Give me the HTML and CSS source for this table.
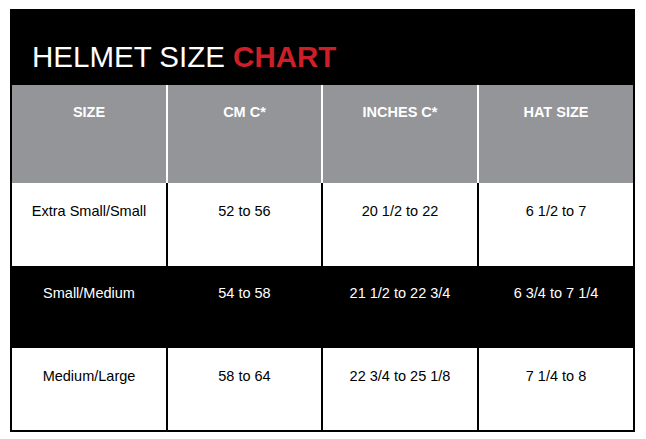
FILE: index.html
```html
<!DOCTYPE html>
<html>
<head>
<meta charset="utf-8">
<link rel="stylesheet" href="styles.css">
</head>
<body>
<div class="chart">
  <div class="title">HELMET SIZE <span class="accent">CHART</span></div>
  <div class="row head">
    <div class="cell">SIZE</div>
    <div class="cell">CM C*</div>
    <div class="cell">INCHES C*</div>
    <div class="cell">HAT SIZE</div>
  </div>
  <div class="row light r1">
    <div class="cell">Extra Small/Small</div>
    <div class="cell">52 to 56</div>
    <div class="cell">20 1/2 to 22</div>
    <div class="cell">6 1/2 to 7</div>
  </div>
  <div class="row dark">
    <div class="cell">Small/Medium</div>
    <div class="cell">54 to 58</div>
    <div class="cell">21 1/2 to 22 3/4</div>
    <div class="cell">6 3/4 to 7 1/4</div>
  </div>
  <div class="row light">
    <div class="cell">Medium/Large</div>
    <div class="cell">58 to 64</div>
    <div class="cell">22 3/4 to 25 1/8</div>
    <div class="cell">7 1/4 to 8</div>
  </div>
</div>
</body>
</html>
```

FILE: styles.css
```css
html, body {
  margin: 0;
  padding: 0;
  background: #ffffff;
}
body {
  padding: 9px 0 0 10px;
  font-family: "Liberation Sans", Arial, sans-serif;
}
.chart {
  width: 625px;
  box-sizing: border-box;
  border: 2px solid #000;
  border-top: none;
  background: #000;
}
.title {
  height: 76px;
  box-sizing: border-box;
  padding: 33px 0 0 20px;
  font-size: 29.5px;
  line-height: 30px;
  color: #fff;
  white-space: nowrap;
}
.accent {
  color: #cc1f28;
  font-weight: bold;
}
.row {
  display: grid;
  grid-template-columns: 154px 155px 156px 156px;
  height: 82px;
}
.row .cell {
  box-sizing: border-box;
  text-align: center;
  font-size: 14.5px;
  line-height: 17px;
  padding-top: 19px;
}
.row .cell + .cell {
  border-left: 2px solid #000;
}
.head {
  height: 98px;
  background: #939598;
}
.head .cell {
  color: #fff;
  font-weight: bold;
}
.head .cell + .cell {
  border-left-color: #fff;
}
.light {
  background: #fff;
}
.light .cell {
  color: #000;
  padding-top: 20px;
}
.r1 {
  height: 83px;
}
.dark {
  background: #000;
}
.dark .cell {
  color: #fff;
}
```
